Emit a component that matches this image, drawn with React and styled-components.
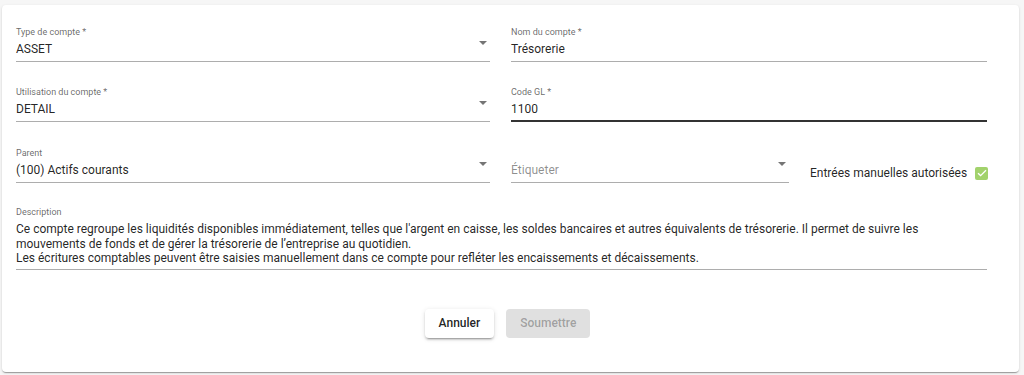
import React from "react";
import styled, { createGlobalStyle } from "styled-components";

const GlobalStyle = createGlobalStyle`
  html, body {
    margin: 0;
    padding: 0;
    background: #f6f6f6;
    font-family: Roboto, "Liberation Sans", Arial, sans-serif;
    color: rgba(0, 0, 0, 0.87);
  }
`;

const Page = styled.div`
  padding: 5px 5px 3px 2px;
`;

const Card = styled.form`
  box-sizing: border-box;
  height: 367px;
  background: #fff;
  border-radius: 4px;
  box-shadow: 0 2px 1px -1px rgba(0, 0, 0, 0.2), 0 1px 1px 0 rgba(0, 0, 0, 0.14),
    0 1px 3px 0 rgba(0, 0, 0, 0.12);
  padding: 21px 32px 0 14px;
`;

const Grid = styled.div`
  display: grid;
  grid-template-columns: 474px 476px;
  column-gap: 21px;
  row-gap: 24px;
`;

const Field = styled.div`
  display: flex;
  flex-direction: column;
  min-width: 0;
  flex: ${(p) => p.$flex || "initial"};
  grid-column: ${(p) => (p.$full ? "1 / -1" : "auto")};
  margin-top: ${(p) => p.$mt || "0"};
`;

const Label = styled.label`
  font-size: 9px;
  line-height: 12px;
  height: 12px;
  color: rgba(0, 0, 0, 0.6);
`;

const InputRow = styled.div`
  display: flex;
  align-items: flex-start;
  padding: ${(p) => p.$pt || "2px"} 0 ${(p) => (p.$focused ? "2px" : "3px")};
  font-size: 12px;
  line-height: ${(p) => p.$lh || "18px"};
  border-bottom: ${(p) =>
    p.$focused ? "2px solid rgba(0, 0, 0, 0.8)" : "1px solid rgba(0, 0, 0, 0.32)"};
  color: ${(p) => (p.$placeholder ? "rgba(0, 0, 0, 0.45)" : "rgba(0, 0, 0, 0.87)")};
`;

const Value = styled.div`
  flex: 1;
  white-space: pre-wrap;
`;

const Arrow = styled.svg`
  width: 8px;
  height: 4px;
  margin: 1px 3px 0 0;
  fill: rgba(0, 0, 0, 0.54);
`;

const SplitRow = styled.div`
  display: flex;
  align-items: flex-end;
  gap: 21px;
  margin-top: 1px;
`;

const CheckGroup = styled.label`
  display: flex;
  align-items: center;
  gap: 8px;
  font-size: 12px;
  white-space: nowrap;
  padding-bottom: 3px;
  color: rgba(0, 0, 0, 0.87);
`;

const CheckBox = styled.span`
  width: 13px;
  height: 13px;
  border-radius: 2px;
  background: #a2d26c;
  display: flex;
  align-items: center;
  justify-content: center;
`;

const Actions = styled.div`
  display: flex;
  justify-content: center;
  gap: 12px;
  margin-top: 39px;
  padding-left: 12px;
`;

const Button = styled.button`
  height: 29px;
  padding: 0 ${(p) => (p.$disabled ? "14px" : "14px")};
  border: none;
  border-radius: 4px;
  font-family: inherit;
  font-size: 12px;
  font-weight: 500;
  background: ${(p) => (p.$disabled ? "#e0e0e0" : "#fff")};
  color: ${(p) => (p.$disabled ? "rgba(0, 0, 0, 0.3)" : "rgba(0, 0, 0, 0.87)")};
  box-shadow: ${(p) =>
    p.$disabled
      ? "none"
      : "0 3px 1px -2px rgba(0,0,0,0.2), 0 2px 2px 0 rgba(0,0,0,0.14), 0 1px 5px 0 rgba(0,0,0,0.12)"};
`;

const DropIcon = () => (
  <Arrow viewBox="0 0 8 4">
    <path d="M0 0h8L4 4z" />
  </Arrow>
);

const SelectField = ({ label, value, placeholder, flex, mt }) => (
  <Field $flex={flex} $mt={mt}>
    <Label>{label}</Label>
    <InputRow $placeholder={placeholder}>
      <Value>{value}</Value>
      <DropIcon />
    </InputRow>
  </Field>
);

const description =
  "Ce compte regroupe les liquidités disponibles immédiatement, telles que l'argent en caisse, les soldes bancaires et autres équivalents de trésorerie. Il permet de suivre les mouvements de fonds et de gérer la trésorerie de l’entreprise au quotidien.\nLes écritures comptables peuvent être saisies manuellement dans ce compte pour refléter les encaissements et décaissements.";

export default function App() {
  return (
    <Page>
      <GlobalStyle />
      <Card onSubmit={(e) => e.preventDefault()}>
        <Grid>
          <SelectField label="Type de compte *" value="ASSET" />
          <Field>
            <Label>Nom du compte *</Label>
            <InputRow>
              <Value>Trésorerie</Value>
            </InputRow>
          </Field>

          <SelectField label="Utilisation du compte *" value="DETAIL" />
          <Field>
            <Label>Code GL *</Label>
            <InputRow $focused>
              <Value>1100</Value>
            </InputRow>
          </Field>

          <SelectField label="Parent" value="(100) Actifs courants" mt="1px" />
          <SplitRow>
            <Field $flex="0 0 278px">
              <InputRow $placeholder>
                <Value>Étiqueter</Value>
                <DropIcon />
              </InputRow>
            </Field>
            <CheckGroup>
              Entrées manuelles autorisées
              <CheckBox>
                <svg width="10" height="8" viewBox="0 0 10 8">
                  <path d="M1 4.2l2.6 2.4L9 1.2" fill="none" stroke="#fff" strokeWidth="1.3" />
                </svg>
              </CheckBox>
            </CheckGroup>
          </SplitRow>

          <Field $full $mt="-1px">
            <Label>Description</Label>
            <InputRow $lh="14.5px" $pt="4px">
              <Value>{description}</Value>
            </InputRow>
          </Field>
        </Grid>
        <Actions>
          <Button type="button">Annuler</Button>
          <Button type="submit" $disabled>
            Soumettre
          </Button>
        </Actions>
      </Card>
    </Page>
  );
}
